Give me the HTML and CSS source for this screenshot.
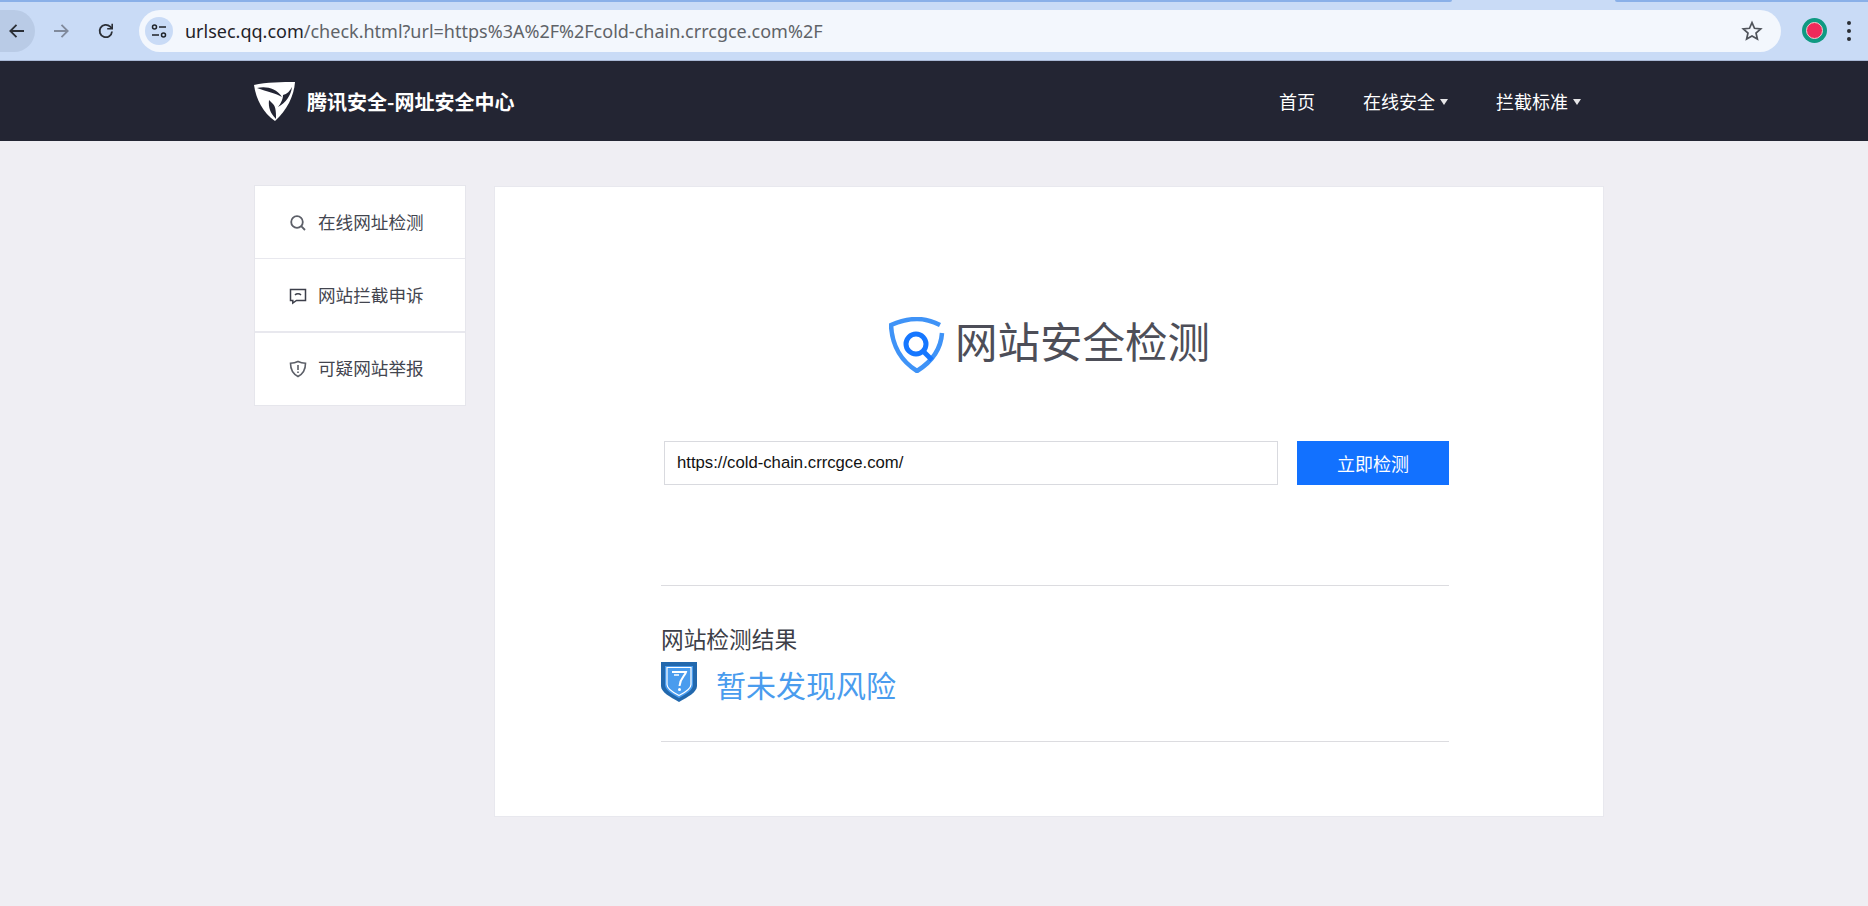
FILE: index.html
```html
<!DOCTYPE html>
<html lang="zh-CN">
<head>
<meta charset="utf-8">
<title>腾讯安全-网址安全中心</title>
<link rel="stylesheet" href="styles.css">
</head>
<body>
<div class="strip"><span class="strip-a"></span><span class="strip-b"></span></div>
<header class="toolbar">
  <div class="back-btn">
    <svg width="20" height="20" viewBox="0 0 20 20" fill="none" stroke="#2b2f36" stroke-width="1.8"><path d="M17 10H3.500M9.500 3.800 3.300 10l6.200 6.200"/></svg>
  </div>
  <div class="fwd-btn">
    <svg width="20" height="20" viewBox="0 0 20 20" fill="none" stroke="#808a9c" stroke-width="1.8"><path d="M3 10h13.500M10.500 3.800l6.200 6.200-6.200 6.200"/></svg>
  </div>
  <div class="reload-btn">
    <svg width="20" height="20" viewBox="0 0 20 20" fill="none" stroke="#2b2f36" stroke-width="1.8"><path d="M16 10.500A6.200 6.200 0 1 1 14.200 5.600L16 7.400"/><path d="M16.200 2.800v5h-5" stroke-width="1.600"/></svg>
  </div>
  <div class="omnibox">
    <div class="tune">
      <svg width="18" height="18" viewBox="0 0 18 18" fill="none" stroke="#1f2329" stroke-width="1.500"><circle cx="4.500" cy="5" r="2"/><path d="M9 5h7M2 13h7"/><circle cx="13.500" cy="13" r="2"/></svg>
    </div>
    <div class="url"><span class="url-host">urlsec.qq.com</span>/check.html?url=https%3A%2F%2Fcold-chain.crrcgce.com%2F</div>
    <svg class="star" width="22" height="22" viewBox="0 0 22 22" fill="none" stroke="#50545b" stroke-width="1.700"><path d="M11 2.600l2.500 5.700 6.200.6-4.700 4.100 1.400 6.100-5.400-3.200-5.400 3.200 1.400-6.100-4.700-4.100 6.200-.6z"/></svg>
  </div>
  <div class="avatar"><span class="melon"></span></div>
  <div class="menu"><i></i><i></i><i></i></div>
</header>

<nav class="site-nav">
  <div class="brand">
    <svg class="brand-logo" width="41" height="39" viewBox="0 0 41 39"><path fill="#fff" d="M0 3C12 0 29 0 41 0c-1 14-8 28-20 39C9 31 2 17 0 3z"/><path fill="#232533" d="M3 6c9-2 19 0 25 9-6-4-15-5-25-9z"/><path fill="#232533" d="M38 5c-1 8-6 16-14 20 4-5 5-9 5-12 4-1 7-4 9-8z"/><path fill="#232533" d="M15 18c-1 8 2 14 7 19 0-6 0-12-3-15l-4-4z"/></svg>
    <span class="brand-name">腾讯安全-网址安全中心</span>
  </div>
  <ul class="nav-links">
    <li>首页</li>
    <li>在线安全<span class="caret"></span></li>
    <li>拦截标准<span class="caret"></span></li>
  </ul>
</nav>

<div class="page">
  <aside class="side">
    <div class="side-item">
      <svg width="18" height="18" viewBox="0 0 18 18" fill="none" stroke="#5c5f68" stroke-width="1.800"><circle cx="8" cy="8" r="5.800"/><path d="M12.200 12.200 16 16"/></svg>
      <span>在线网址检测</span>
    </div>
    <div class="side-item">
      <svg width="18" height="18" viewBox="0 0 18 18" fill="none" stroke="#3c3f4a" stroke-width="1.500"><path d="M1.500 2.500h15v11H7.500L3.800 16v-2.500H1.500z"/><path d="M6 8c1.500-1.600 4.500-1.600 6 0"/></svg>
      <span>网站拦截申诉</span>
    </div>
    <div class="side-item">
      <svg width="18" height="18" viewBox="0 0 18 18" fill="none" stroke="#5c5f68" stroke-width="1.600"><path d="M9 1.500c2.500 1.200 5 1.700 7.500 1.800C16.500 9 14 14 9 16.500 4 14 1.500 9 1.500 3.300 4 3.200 6.500 2.700 9 1.500z"/><path d="M9 5v5M9 11.500v1.500"/></svg>
      <span>可疑网站举报</span>
    </div>
  </aside>

  <main class="panel">
    <div class="title-row">
      <svg class="title-icon" width="56" height="56" viewBox="0 0 56 56" fill="none"><path d="M53 16C52 31 44 44 28 54 12 44 3 28 2 8 11 4 20 2 28 2c7 0 15 2 23 6" stroke="#3f93f7" stroke-width="4.500"/><circle cx="27" cy="27" r="10" stroke="#1677ff" stroke-width="5"/><path d="M34 34l9 9" stroke="#1677ff" stroke-width="5"/></svg>
      <h1>网站安全检测</h1>
    </div>
    <form class="search">
      <input class="search-input" type="text" value="https://cold-chain.crrcgce.com/">
      <button class="search-btn" type="button">立即检测</button>
    </form>
    <section class="result">
      <h2>网站检测结果</h2>
      <div class="verdict">
        <svg width="36" height="40" viewBox="0 0 36 40"><path fill="#2268ad" d="M0 0h36v24c0 6-9 11-18 16C9 35 0 30 0 24z"/><path fill="#4a9cee" d="M4 4h28v19c0 5-7 9-14 13C11 32 4 28 4 23z"/><path fill="none" stroke="#fff" stroke-width="1.200" d="M6 5.500h24v17c0 4-6 8-12 11C12 30.500 6 26.500 6 22.500z"/><path fill="none" stroke="#fff" stroke-width="2" d="M11 10h14c-1 4-6 6-6.500 14"/><path fill="none" stroke="#fff" stroke-width="1.500" d="M13 13h5"/><circle cx="18.500" cy="27.500" r="1.500" fill="#fff"/></svg>
        <span>暂未发现风险</span>
      </div>
    </section>
  </main>
</div>
</body>
</html>
```

FILE: styles.css
```css
* { box-sizing: border-box; }
html, body { margin: 0; padding: 0; }
body {
  width: 1868px;
  height: 906px;
  overflow: hidden;
  background: #efeef3;
  font-family: "Noto Sans CJK SC", "Liberation Sans", sans-serif;
  color: #43454f;
}

.strip { height: 2px; background: #c9dbf6; display: flex; justify-content: space-between; }
.strip-a { width: 1452px; background: #8ab0e8; border-bottom-right-radius: 10px; }
.strip-b { width: 253px; background: #8ab0e8; border-bottom-left-radius: 10px; }

.toolbar {
  height: 59px;
  background: #c9dbf6;
  border-bottom: 1px solid #a9b9d6;
  display: flex;
  align-items: center;
}
.back-btn {
  width: 35px;
  height: 42px;
  margin-top: -1px;
  border-radius: 0 21px 21px 0;
  background: #b9cbe6;
  display: flex;
  align-items: center;
  justify-content: flex-end;
  padding-right: 8px;
}
.fwd-btn { margin-left: 16px; width: 20px; height: 20px; }
.reload-btn { margin-left: 25px; width: 20px; height: 20px; }
.omnibox {
  margin-left: 23px;
  margin-top: -1px;
  width: 1642px;
  height: 42px;
  border-radius: 21px;
  background: #f3f7fd;
  display: flex;
  align-items: center;
  padding: 0 6px;
}
.tune {
  width: 28px;
  height: 28px;
  border-radius: 50%;
  background: #c9dbf6;
  display: flex;
  align-items: center;
  justify-content: center;
}
.url {
  margin-left: 12px;
  font-family: "Noto Sans", "Liberation Sans", sans-serif;
  font-size: 18px;
  color: #5f6368;
  flex: 1;
  white-space: nowrap;
}
.url-host { color: #1f2329; }
.star { margin-right: 12px; }
.avatar {
  margin-left: 21px;
  width: 25px;
  height: 25px;
  margin-top: -1px;
  border-radius: 50%;
  background: #0f9a82;
  display: flex;
  align-items: center;
  justify-content: center;
}
.melon { width: 17px; height: 17px; border-radius: 50%; background: #ee2a5a; border: 1px solid #f4cdd0; }
.menu { margin-left: 20px; display: flex; flex-direction: column; gap: 4px; }
.menu i { display: block; width: 4px; height: 4px; border-radius: 50%; background: #2a2d33; }

.site-nav {
  height: 80px;
  background: #232533;
  display: flex;
  align-items: center;
  justify-content: space-between;
  padding: 0 287px 0 254px;
  color: #fff;
}
.brand { display: flex; align-items: center; gap: 12px; }
.brand-name { font-size: 20px; font-weight: 700; }
.nav-links { display: flex; gap: 48px; list-style: none; margin: 0; padding: 0; font-size: 18px; }
.nav-links li { display: flex; align-items: center; }
.caret {
  margin-left: 5px;
  margin-top: 1px;
  width: 0;
  height: 0;
  border-left: 4px solid transparent;
  border-right: 4px solid transparent;
  border-top: 6px solid #e6e6e8;
}

.page { display: flex; align-items: flex-start; padding: 44px 0 0 254px; }
.side {
  width: 212px;
  background: #fff;
  border: 1px solid #e6e6ec;
  display: flex;
  flex-direction: column;
}
.side-item {
  height: 73px;
  display: flex;
  align-items: center;
  gap: 11px;
  padding-left: 34px;
  padding-bottom: 2px;
  font-size: 17.600px;
  border-bottom: 1px solid #e8e8ee;
}
.side-item svg { margin-top: 3px; }
.side-item:nth-child(2) { border-bottom-width: 2px; height: 74px; }
.side-item:last-child { border-bottom: 0; height: 72px; padding-bottom: 4px; }

.panel {
  margin-left: 28px;
  margin-top: 1px;
  width: 1110px;
  height: 631px;
  background: #fff;
  border: 1px solid #e8e8ee;
  padding: 0 155px 0 167px;
}
.title-row {
  margin-top: 125px;
  height: 56px;
  margin-left: 227px;
  display: flex;
  align-items: center;
  gap: 10px;
}
.title-icon { margin-top: 10px; }
.title-row h1 { margin: 0; font-size: 42.500px; font-weight: 400; color: #4d4e58; line-height: 56px; }
.search { margin-top: 73px; display: flex; gap: 19px; margin-left: 2px; margin-right: -1px; }
.search-input {
  width: 615px;
  height: 44px;
  border: 1px solid #d9dadf;
  padding: 0 12px;
  font-family: "Liberation Sans", sans-serif;
  font-size: 16.700px;
  color: #111;
  background: #fff;
  outline: 0;
}
.search-btn {
  width: 152px;
  height: 44px;
  border: 0;
  background: #1271ff;
  color: #fff;
  font-family: "Noto Sans CJK SC", sans-serif;
  font-size: 18px;
}
.result {
  margin-top: 100px;
  margin-left: -1px;
  width: 788px;
  height: 157px;
  border-top: 1px solid #dcdce0;
  border-bottom: 1px solid #dcdce0;
  padding-top: 37px;
}
.result h2 { margin: 0; font-size: 22.700px; font-weight: 400; color: #3d3f48; line-height: 32px; }
.verdict { margin-top: 7px; display: flex; align-items: flex-start; gap: 19px; }
.verdict span { font-size: 30px; color: #4a9cee; line-height: 44px; }
```
